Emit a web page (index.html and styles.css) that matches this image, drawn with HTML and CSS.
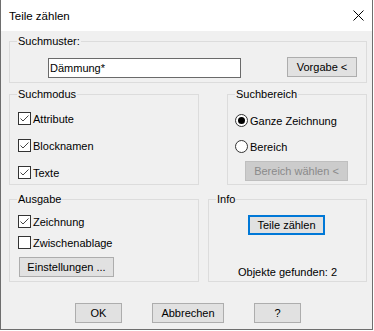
FILE: index.html
```html
<!DOCTYPE html>
<html lang="de">
<head>
<meta charset="utf-8">
<title>Teile zählen</title>
<link rel="stylesheet" href="styles.css">
</head>
<body>
<div class="window">
  <div class="titlebar">
    <span class="title">Teile zählen</span>
    <svg class="close" width="11" height="11" viewBox="0 0 11 11"><path d="M0.5 0.5 L10.5 10.5 M10.5 0.5 L0.5 10.5" stroke="#000" stroke-width="1" fill="none"/></svg>
  </div>
  <div class="content">
    <div class="group g-muster">
      <div class="legend">Suchmuster:</div>
      <div class="muster-row">
        <div class="textbox">Dämmung*</div>
        <div class="btn btn-vorgabe">Vorgabe &lt;</div>
      </div>
    </div>

    <div class="row row1">
      <div class="group g-modus">
        <div class="legend">Suchmodus</div>
        <div class="checks checks-modus">
          <div class="check"><svg class="cb" width="13" height="13" viewBox="0 0 13 13"><rect x="0.5" y="0.5" width="12" height="12" fill="#fff" stroke="#333"/><path d="M2.5 6.5 L5 9 L10.5 3.5" fill="none" stroke="#444" stroke-width="1"/></svg><span>Attribute</span></div>
          <div class="check"><svg class="cb" width="13" height="13" viewBox="0 0 13 13"><rect x="0.5" y="0.5" width="12" height="12" fill="#fff" stroke="#333"/><path d="M2.5 6.5 L5 9 L10.5 3.5" fill="none" stroke="#444" stroke-width="1"/></svg><span>Blocknamen</span></div>
          <div class="check"><svg class="cb" width="13" height="13" viewBox="0 0 13 13"><rect x="0.5" y="0.5" width="12" height="12" fill="#fff" stroke="#333"/><path d="M2.5 6.5 L5 9 L10.5 3.5" fill="none" stroke="#444" stroke-width="1"/></svg><span>Texte</span></div>
        </div>
      </div>
      <div class="group g-bereich">
        <div class="legend">Suchbereich</div>
        <div class="radios">
          <div class="check"><svg class="rb" width="13" height="13" viewBox="0 0 13 13"><circle cx="6.5" cy="6.5" r="6" fill="#fff" stroke="#333"/><circle cx="6.5" cy="6.5" r="3.5" fill="#000"/></svg><span>Ganze Zeichnung</span></div>
          <div class="check"><svg class="rb" width="13" height="13" viewBox="0 0 13 13"><circle cx="6.5" cy="6.5" r="6" fill="#fff" stroke="#333"/></svg><span>Bereich</span></div>
        </div>
        <div class="btn btn-disabled btn-bereich">Bereich wählen &lt;</div>
      </div>
    </div>

    <div class="row row2">
      <div class="group g-ausgabe">
        <div class="legend">Ausgabe</div>
        <div class="checks checks-ausgabe">
          <div class="check"><svg class="cb" width="13" height="13" viewBox="0 0 13 13"><rect x="0.5" y="0.5" width="12" height="12" fill="#fff" stroke="#333"/><path d="M2.5 6.5 L5 9 L10.5 3.5" fill="none" stroke="#444" stroke-width="1"/></svg><span>Zeichnung</span></div>
          <div class="check"><svg class="cb" width="13" height="13" viewBox="0 0 13 13"><rect x="0.5" y="0.5" width="12" height="12" fill="#fff" stroke="#333"/></svg><span>Zwischenablage</span></div>
        </div>
        <div class="btn btn-einst">Einstellungen ...</div>
      </div>
      <div class="group g-info">
        <div class="legend">Info</div>
        <div class="btn btn-default btn-teile">Teile zählen</div>
        <div class="found">Objekte gefunden: 2</div>
      </div>
    </div>

    <div class="footer">
      <div class="btn btn-ok">OK</div>
      <div class="btn btn-cancel">Abbrechen</div>
      <div class="btn btn-help">?</div>
    </div>
  </div>
</div>
</body>
</html>
```
FILE: styles.css
```css
html, body {
  margin: 0;
  padding: 0;
  background: #ffffff;
}
body {
  font-family: "Liberation Sans", Arial, sans-serif;
  font-size: 11px;
  color: #000;
}
.window {
  width: 373px;
  height: 330px;
  box-sizing: border-box;
  border: 1px solid #6e6e6e;
  border-top: none;
  background: #f0f0f0;
  display: flex;
  flex-direction: column;
}
.titlebar {
  flex: none;
  height: 31px;
  background: #fff;
  display: flex;
  align-items: center;
  justify-content: space-between;
  padding: 0 8px;
}
.title {
  font-size: 11.5px;
}
.close {
  display: block;
}
.content {
  flex: 1;
  display: flex;
  flex-direction: column;
  padding: 10px 0 0 8px;
}
.group {
  box-sizing: border-box;
  border: 1px solid #dcdcdc;
  display: flex;
  flex-direction: column;
  align-items: flex-start;
}
.legend {
  margin: -7px 0 0 7px;
  padding: 0 1px;
  background: #f0f0f0;
  line-height: 13px;
  height: 13px;
  white-space: nowrap;
}
.g-muster {
  width: 358px;
  height: 42px;
}
.muster-row {
  display: flex;
  align-items: flex-start;
  margin-top: 9px;
}
.textbox {
  box-sizing: border-box;
  width: 193px;
  height: 20px;
  margin: 1px 0 0 38px;
  border: 1px solid #6a6a6a;
  background: #fff;
  padding-left: 1px;
  line-height: 18px;
}
.btn {
  box-sizing: border-box;
  height: 20px;
  border: 1px solid #adadad;
  background: #e1e1e1;
  display: flex;
  align-items: center;
  justify-content: center;
  white-space: nowrap;
}
.btn-vorgabe {
  width: 70px;
  margin-left: 46px;
}
.row {
  display: flex;
  align-items: flex-start;
}
.row1 {
  margin-top: 11px;
}
.g-modus {
  width: 190px;
  height: 91px;
}
.g-bereich {
  width: 140px;
  height: 91px;
  margin-left: 28px;
}
.checks, .radios {
  display: flex;
  flex-direction: column;
}
.checks-modus {
  margin: 11px 0 0 8px;
  gap: 14px;
}
.radios {
  margin: 13px 0 0 7px;
  gap: 13px;
}
.check {
  display: flex;
  align-items: center;
  gap: 2px;
  height: 13px;
  white-space: nowrap;
}
.check svg {
  display: block;
  flex: none;
}
.btn-bereich {
  width: 103px;
  margin: 8px 0 0 17px;
}
.btn-disabled {
  background: #cccccc;
  border-color: #bfbfbf;
  color: #8a8a8a;
}
.row2 {
  margin-top: 14px;
}
.g-ausgabe {
  width: 190px;
  height: 83px;
}
.checks-ausgabe {
  margin: 9px 0 0 8px;
  gap: 8px;
}
.btn-einst {
  width: 95px;
  margin: 8px 0 0 9px;
}
.g-info {
  width: 159px;
  height: 83px;
  margin-left: 9px;
}
.btn-default {
  border: 2px solid #0078d7;
}
.btn-teile {
  width: 77px;
  margin: 9px 0 0 39px;
}
.found {
  align-self: stretch;
  text-align: center;
  line-height: 13px;
  margin-top: 31px;
}
.footer {
  display: flex;
  gap: 30px;
  margin-top: 21px;
  padding-left: 66px;
}
.btn-ok, .btn-help {
  width: 47px;
}
.btn-cancel {
  width: 72px;
}
```
